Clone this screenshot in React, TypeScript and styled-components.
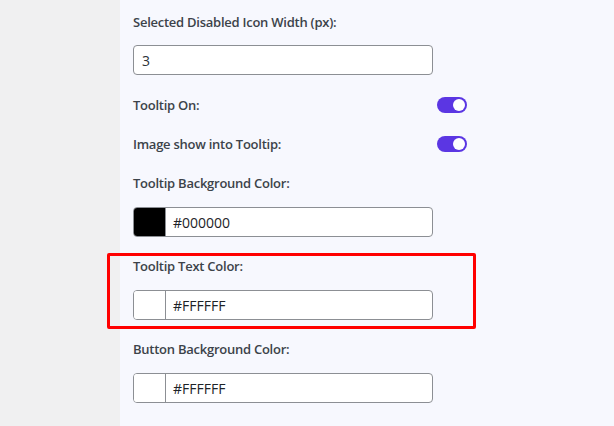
import React from 'react'
import styled, { createGlobalStyle } from 'styled-components'

const GlobalStyle = createGlobalStyle`
  html, body {
    margin: 0;
    padding: 0;
    height: 100%;
    background: #f0f0f1;
  }
  #root {
    height: 100%;
  }
`

type ColorField = {
  label: string
  value: string
  highlighted?: boolean
}

const colorFields: ColorField[] = [
  { label: 'Tooltip Background Color:', value: '#000000' },
  { label: 'Tooltip Text Color:', value: '#FFFFFF', highlighted: true },
  { label: 'Button Background Color:', value: '#FFFFFF' },
]

const App: React.FC = () => {
  return (
    <>
      <GlobalStyle />
      <Layout>
        <Sidebar />
        <Panel>
          <Field $gap={13} $after={1}>
            <Label>Selected Disabled Icon Width (px):</Label>
            <TextInput>3</TextInput>
          </Field>
          <ToggleRow>
            <Label>Tooltip On:</Label>
            <Toggle $on />
          </ToggleRow>
          <ToggleRow>
            <Label>Image show into Tooltip:</Label>
            <Toggle $on />
          </ToggleRow>
          {colorFields.map((f) => (
            <Field key={f.label} $highlighted={f.highlighted}>
              <Label>{f.label}</Label>
              <ColorInput>
                <Swatch $color={f.value} />
                <ColorValue>{f.value}</ColorValue>
              </ColorInput>
            </Field>
          ))}
        </Panel>
      </Layout>
    </>
  )
}

const Layout = styled.div`
  display: flex;
  height: 426px;
  overflow: hidden;
  font-family: 'Open Sans', 'Noto Sans', sans-serif;
`

const Sidebar = styled.div`
  width: 120px;
  flex-shrink: 0;
  background: #f0f0f1;
`

const Panel = styled.div`
  flex: 1;
  background: #f7f8fe;
  padding: 12px 0 0 13px;
  display: flex;
  flex-direction: column;
  gap: 19px;
`

const Field = styled.div<{ $highlighted?: boolean; $gap?: number; $after?: number }>`
  position: relative;
  width: 300px;
  display: flex;
  flex-direction: column;
  gap: ${(p) => p.$gap ?? 14}px;
  margin-bottom: ${(p) => p.$after ?? 0}px;

  ${(p) =>
    p.$highlighted &&
    `
    &::before {
      content: '';
      position: absolute;
      left: -26px;
      right: -43px;
      top: -3px;
      bottom: -9px;
      border: 3px solid #ff0000;
      border-radius: 2px;
      pointer-events: none;
    }
  `}
`

const Label = styled.div`
  font-size: 13px;
  font-weight: 600;
  line-height: 20px;
  color: #3c434a;
  letter-spacing: -0.25px;
`

const TextInput = styled.div`
  box-sizing: border-box;
  height: 30px;
  border: 1px solid #8c8f94;
  border-radius: 4px;
  background: #ffffff;
  padding: 0 8px;
  display: flex;
  align-items: center;
  font-size: 14px;
  color: #2c3338;
`

const ToggleRow = styled.div`
  width: 334px;
  height: 20px;
  display: flex;
  align-items: center;
  justify-content: space-between;
`

const Toggle = styled.div<{ $on?: boolean }>`
  position: relative;
  width: 30px;
  height: 16px;
  border-radius: 8px;
  background: ${(p) => (p.$on ? '#5b36e3' : '#c3c4c7')};

  &::after {
    content: '';
    position: absolute;
    top: 2px;
    left: ${(p) => (p.$on ? '16px' : '2px')};
    width: 12px;
    height: 12px;
    border-radius: 50%;
    background: #ffffff;
  }
`

const ColorInput = styled.div`
  box-sizing: border-box;
  height: 30px;
  border: 1px solid #8c8f94;
  border-radius: 4px;
  background: #ffffff;
  display: flex;
  align-items: stretch;
  overflow: hidden;
`

const Swatch = styled.div<{ $color: string }>`
  width: 31px;
  flex-shrink: 0;
  background: ${(p) => p.$color};
  border-right: 1px solid #8c8f94;
`

const ColorValue = styled.div`
  display: flex;
  align-items: center;
  padding-left: 7px;
  font-size: 14px;
  color: #1d2327;
`

export default App
